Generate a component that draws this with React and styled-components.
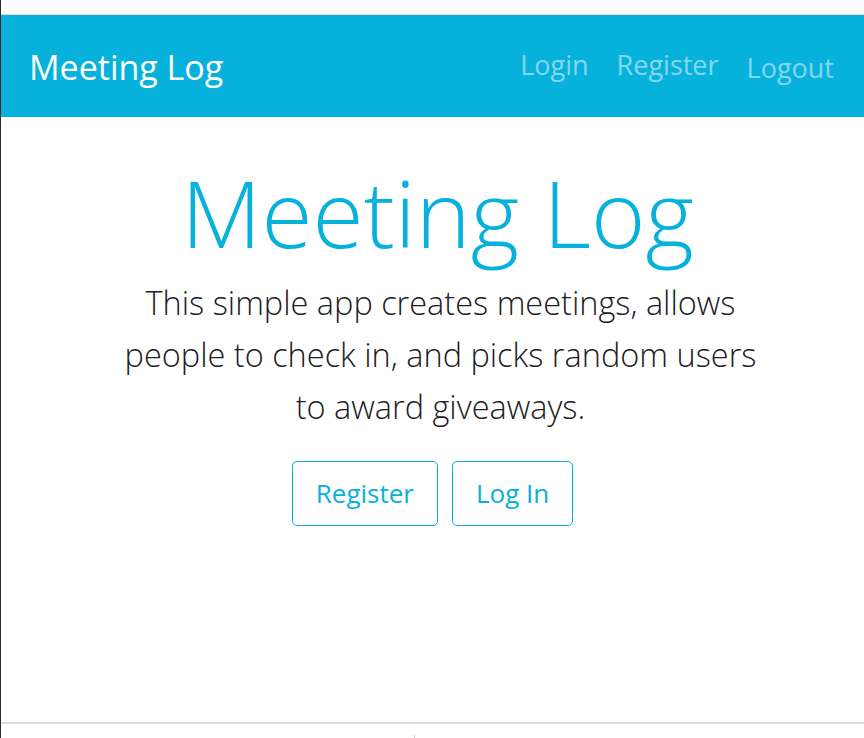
import React from 'react';
import styled, { createGlobalStyle } from 'styled-components';

const Global = createGlobalStyle`
  html, body { margin: 0; padding: 0; background: #fff; }
  body { font-family: "Open Sans", "Liberation Sans", sans-serif; }
`;

const Page = styled.div`
  min-height: 738px;
  border-left: 1px solid #2a2a2a;
  box-sizing: border-box;
  display: flex;
  flex-direction: column;
  padding-top: 14px;
`;

const Navbar = styled.nav`
  height: 103px;
  background: #06b1dc;
  border-top: 1px solid #dcdcdc;
  box-sizing: border-box;
  display: flex;
  align-items: center;
  justify-content: space-between;
  padding: 0 30px 0 28px;
`;

const Brand = styled.a`
  color: #fff;
  font-size: 34px;
  font-weight: 400;
  text-decoration: none;
  margin-top: 2px;
`;

const NavLinks = styled.div`
  display: flex;
  align-items: center;
  gap: 28px;
`;

const NavLink = styled.a`
  color: rgba(255, 255, 255, 0.5);
  font-size: 27px;
  font-weight: 400;
  text-decoration: none;
  margin-top: ${(p) => (p.$low ? '2px' : '-3px')};
`;

const Hero = styled.main`
  flex: 1;
  display: flex;
  flex-direction: column;
  align-items: center;
  padding-top: 40px;
`;

const Title = styled.h1`
  margin: 0;
  padding-left: 10px;
  color: #06b1dc;
  font-size: 93px;
  font-weight: 300;
  line-height: 1.2;
`;

const Lead = styled.p`
  margin: 8px 0 0;
  padding-left: 16px;
  max-width: 640px;
  text-align: center;
  color: #1d2024;
  font-size: 32.5px;
  font-weight: 300;
  line-height: 52px;
`;

const Actions = styled.div`
  display: flex;
  gap: 14px;
  margin-top: 28px;
`;

const OutlineButton = styled.button`
  height: 65px;
  padding: 0 23px;
  background: #fff;
  border: 1px solid #06b1dc;
  border-radius: 5px;
  color: #06b1dc;
  font-family: inherit;
  font-size: 26px;
  font-weight: 400;
  cursor: pointer;
`;

const Footer = styled.footer`
  height: 14px;
  border-top: 2px solid #dcdcdc;
  position: relative;
`;

const Tick = styled.span`
  position: absolute;
  left: 413px;
  bottom: 0;
  width: 1px;
  height: 3px;
  background: #c8c8c8;
`;

export default function App() {
  return (
    <>
      <Global />
      <Page>
        <Navbar>
          <Brand href="#">Meeting Log</Brand>
          <NavLinks>
            <NavLink href="#">Login</NavLink>
            <NavLink href="#">Register</NavLink>
            <NavLink href="#" $low>Logout</NavLink>
          </NavLinks>
        </Navbar>
        <Hero>
          <Title>Meeting Log</Title>
          <Lead>
            This simple app creates meetings, allows people to check in, and picks random users to award giveaways.
          </Lead>
          <Actions>
            <OutlineButton>Register</OutlineButton>
            <OutlineButton>Log In</OutlineButton>
          </Actions>
        </Hero>
        <Footer>
          <Tick />
        </Footer>
      </Page>
    </>
  );
}
